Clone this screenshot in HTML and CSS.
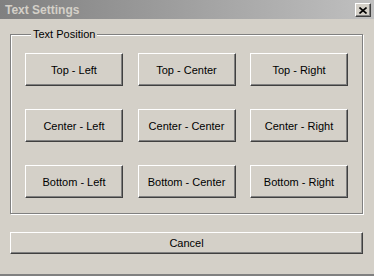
FILE: index.html
```html
<!DOCTYPE html>
<html lang="en">
<head>
  <meta charset="UTF-8">
  <title>Text Settings</title>
  <link rel="stylesheet" href="styles.css">
</head>
<body>
  <div class="window">
    <div class="titlebar">
      <span class="title">Text Settings</span>
      <button class="close-btn" aria-label="Close">
        <svg width="8" height="7" viewBox="0 0 8 7">
          <path d="M0.5 0.5 L7.5 6.5 M7.5 0.5 L0.5 6.5" stroke="#000" stroke-width="1.6" fill="none"/>
        </svg>
      </button>
    </div>

    <div class="content">
      <div class="group">
        <span class="legend">Text Position</span>
        <div class="grid">
          <button class="btn">Top - Left</button>
          <button class="btn">Top - Center</button>
          <button class="btn">Top - Right</button>
          <button class="btn">Center - Left</button>
          <button class="btn">Center - Center</button>
          <button class="btn">Center - Right</button>
          <button class="btn">Bottom - Left</button>
          <button class="btn">Bottom - Center</button>
          <button class="btn">Bottom - Right</button>
        </div>
      </div>
      <button class="btn cancel">Cancel</button>
    </div>
  </div>
</body>
</html>
```

FILE: styles.css
```css
* {
  margin: 0;
  padding: 0;
  box-sizing: border-box;
}

body {
  background-color: #d4d0c8;
  font-family: 'Liberation Sans', Arial, sans-serif;
  font-size: 11px;
  color: #000;
}

.window {
  width: 374px;
  height: 276px;
  background-color: #d4d0c8;
  border-bottom: 2px solid #808080;
}

.titlebar {
  height: 19px;
  display: flex;
  justify-content: space-between;
  align-items: center;
  padding: 0 3px 0 5px;
  background: linear-gradient(to right, #808080, #c0c0c0);
}

.title {
  font-family: 'Liberation Sans', Arial, sans-serif;
  font-weight: bold;
  font-size: 12px;
  color: #d4d0c8;
  margin-top: 1px;
}

.close-btn {
  width: 16px;
  height: 14px;
  display: flex;
  align-items: center;
  justify-content: center;
  background-color: #d4d0c8;
  border: 1px solid;
  border-color: #fff #404040 #404040 #fff;
  box-shadow: inset -1px -1px 0 #808080;
  margin-top: 1px;
}

.content {
  padding: 15px 11px 0 10px;
}

.group {
  border: 1px solid #808080;
  box-shadow: 1px 1px 0 #fff, inset 1px 1px 0 #fff;
  height: 180px;
  padding: 0 14px 0 14px;
}

.legend {
  display: block;
  width: fit-content;
  margin: -7px 0 0 6px;
  padding: 0 2px 0 2px;
  background-color: #d4d0c8;
  line-height: 13px;
}

.grid {
  display: grid;
  grid-template-columns: repeat(3, 98px);
  grid-auto-rows: 33px;
  justify-content: space-between;
  row-gap: 23px;
  margin-top: 12px;
}

.btn {
  font-family: 'Liberation Sans', Arial, sans-serif;
  font-size: 11px;
  color: #000;
  background-color: #d4d0c8;
  border: 1px solid;
  border-color: #fff #404040 #404040 #fff;
  box-shadow: inset -1px -1px 0 #808080;
}

.cancel {
  display: block;
  width: 353px;
  height: 22px;
  margin-top: 18px;
}
```
